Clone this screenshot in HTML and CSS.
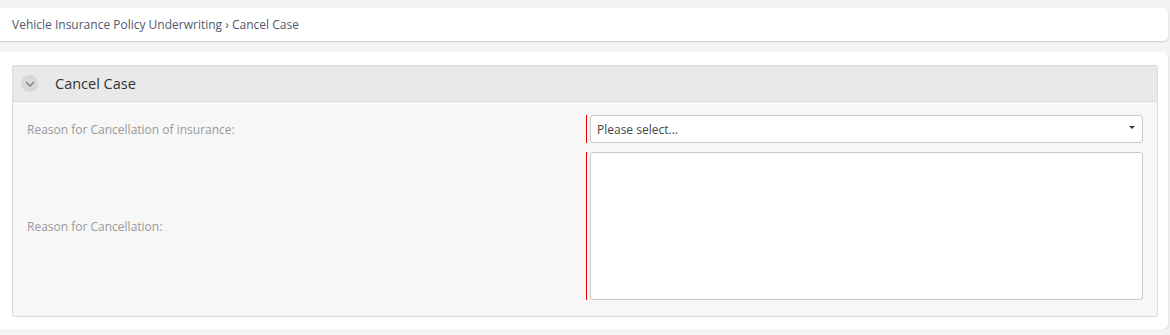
FILE: index.html
```html
<!DOCTYPE html>
<html lang="en">
<head>
<meta charset="UTF-8">
<title>Cancel Case</title>
<link rel="stylesheet" href="styles.css">
</head>
<body>

<div class="crumbs">
  <a href="#">Vehicle Insurance Policy Underwriting</a> &rsaquo; <span>Cancel Case</span>
</div>

<div class="card">
  <div class="panel">
    <div class="panel-head">
      <span class="toggle">
        <svg width="10" height="6" viewBox="0 0 10 6"><path d="M1 1 L5 5 L9 1" fill="none" stroke="#888" stroke-width="1.6"/></svg>
      </span>
      <span class="title">Cancel Case</span>
    </div>
    <div class="panel-body">
      <div class="row">
        <label class="lbl">Reason for Cancellation of insurance:</label>
        <div class="field required">
          <div class="select">
            <span>Please select...</span>
            <span class="caret"></span>
          </div>
        </div>
      </div>
      <div class="row">
        <label class="lbl">Reason for Cancellation:</label>
        <div class="field required">
          <textarea class="area"></textarea>
        </div>
      </div>
    </div>
  </div>
</div>

</body>
</html>
```

FILE: styles.css
```css
* {
  box-sizing: border-box;
}

/* Page */
body {
  font-family: 'Open Sans', sans-serif;
  font-size: 12px;
  margin: 0;
  padding: 8px 2px 0 0;
  background-color: #f4f4f4;
  color: #333;
}

/* Breadcrumb bar */
.crumbs {
  background-color: #fff;
  border-radius: 0 5px 5px 0;
  box-shadow: 0 1px 2px rgba(0,0,0,0.18);
  height: 33px;
  line-height: 33px;
  padding: 0 12px;
  color: #505a6b;
}

.crumbs a {
  color: #505a6b;
  text-decoration: none;
}

/* Main card */
.card {
  margin-top: 11px;
  background-color: #fff;
  border-radius: 0 5px 5px 0;
  box-shadow: 0 1px 2px rgba(0,0,0,0.18);
  padding: 13px 10px 12px 12px;
}

.panel {
  border: 1px solid #dcdcdc;
  border-radius: 2px;
  background-color: #f7f7f7;
}

.panel-head {
  display: flex;
  align-items: center;
  height: 36px;
  background-color: #e9e9e9;
  border-bottom: 1px solid #dcdcdc;
  padding-left: 8px;
}

.toggle {
  width: 17px;
  height: 17px;
  border-radius: 50%;
  background-color: #d8d8d8;
  display: flex;
  align-items: center;
  justify-content: center;
}

.title {
  margin-left: 17px;
  font-size: 14.5px;
  color: #333;
}

.panel-body {
  padding: 13px 14px 16px 14px;
}

/* Form rows */
.row {
  display: flex;
  align-items: center;
  margin-bottom: 9px;
}

.row:last-child {
  margin-bottom: 0;
}

.lbl {
  width: 559px;
  color: #999;
  font-size: 12px;
}

.field {
  flex: 1;
  padding-left: 3px;
}

.required {
  border-left: 1px solid #e00;
}

.select {
  height: 28px;
  background-color: #fff;
  border: 1px solid #c8c8c8;
  border-radius: 3px;
  display: flex;
  align-items: center;
  justify-content: space-between;
  padding: 0 7px 0 6px;
  color: #444;
}

.caret {
  width: 0;
  height: 0;
  border-left: 3px solid transparent;
  border-right: 3px solid transparent;
  border-top: 3px solid #333;
  margin-top: -3px;
}

.area {
  display: block;
  width: 100%;
  height: 148px;
  background-color: #fff;
  border: 1px solid #c8c8c8;
  border-radius: 3px;
  resize: none;
  font-family: 'Open Sans', sans-serif;
}
```
